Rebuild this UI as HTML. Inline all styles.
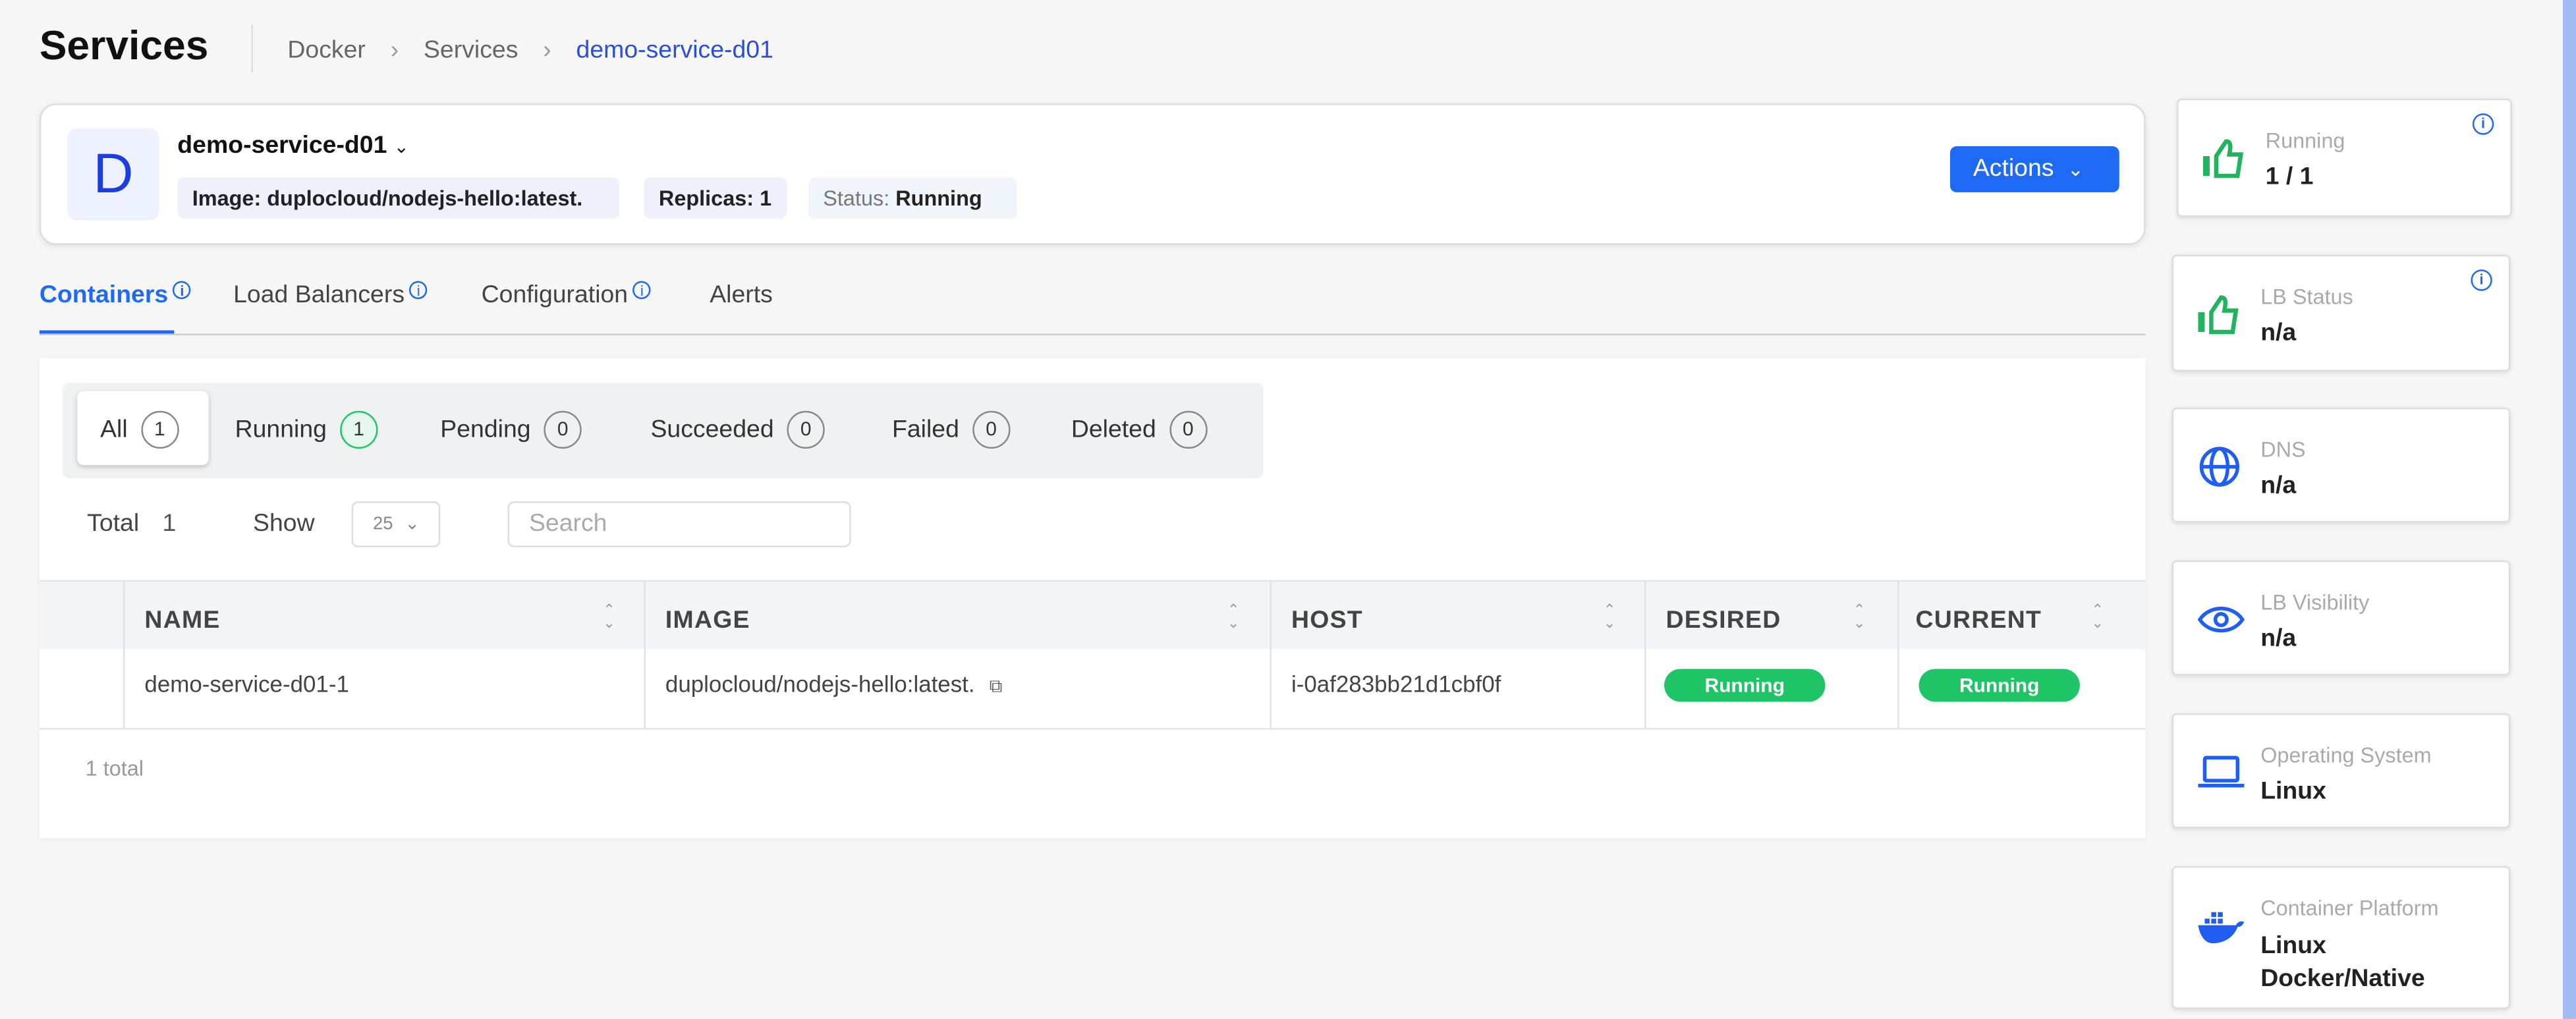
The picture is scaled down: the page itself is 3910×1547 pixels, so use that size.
<!DOCTYPE html>
<html><head><meta charset="utf-8"><style>
*{box-sizing:border-box;margin:0;padding:0}
html,body{width:3910px;height:1547px;overflow:hidden;background:#f6f6f6}
#s{position:absolute;left:0;top:0;width:1568px;height:620px;transform:scale(2.4936,2.495);transform-origin:0 0;font-family:"Liberation Sans",sans-serif;color:#222}
.a{position:absolute}
.card{background:#fff;border:1px solid #ddd;border-radius:10px}
.chip{position:absolute;top:108px;height:25px;border-radius:4px;background:#eef1fb;font-size:13px;line-height:25px;padding-left:9px;color:#222}
.tab{position:absolute;top:171px;font-size:15px;color:#444;line-height:18px}
.tab i{font-style:normal;font-size:9px;color:#1f6af5;border:1px solid #1f6af5;border-radius:50%;display:inline-block;width:11px;height:11px;line-height:10px;text-align:center;position:relative;top:-4px;margin-left:3px;vertical-align:top;margin-top:4px}
.f{position:absolute;top:250px;font-size:15px;color:#333}
.f b{display:inline-block;font-weight:normal;font-size:12px;width:23px;height:23px;line-height:21px;text-align:center;border:1px solid #888;border-radius:50%;margin-left:8px;vertical-align:1px}
.th{position:absolute;top:369px;font-size:15px;font-weight:bold;color:#444;letter-spacing:.5px}
.srt{position:absolute;top:367px;font-size:9px;color:#999;line-height:8px}
.vl{position:absolute;top:353px;width:1px;height:90px;background:#e2e2e6}
.td{position:absolute;top:408px;font-size:14px;color:#444}
.pill{position:absolute;top:407px;width:98px;height:20px;border-radius:10px;background:#1fc466;color:#fff;font-size:12px;font-weight:bold;text-align:center;line-height:20px}
.rc{position:absolute;background:#fff;border:1px solid #ddd;border-radius:3px;box-shadow:0 1px 3px rgba(0,0,0,.1)}
.rc .l{position:absolute;left:53px;font-size:13px;color:#aaa}
.rc .v{position:absolute;left:53px;font-size:15px;font-weight:bold;color:#222}
.rc svg{position:absolute;left:14px}
.inf{position:absolute;right:10px;top:8px;width:13px;height:13px;border:1.3px solid #1f6af5;border-radius:50%;font-size:9px;font-weight:bold;color:#1f6af5;text-align:center;line-height:11px}
</style></head><body><div id="s">
<div class="a" style="left:24px;top:14px;font-size:25px;font-weight:bold;color:#111">Services</div>
<div class="a" style="left:153px;top:15px;width:1px;height:29px;background:#ddd"></div>
<div class="a" style="left:175px;top:22px;font-size:15px;color:#666">Docker <span style="margin:0 11px;color:#999">›</span> Services <span style="margin:0 11px;color:#999">›</span> <span style="color:#2a4fd6">demo-service-d01</span></div>

<div class="a card" style="left:24px;top:63px;width:1282px;height:86px;box-shadow:0 1px 4px rgba(0,0,0,.08)"></div>
<div class="a" style="left:41px;top:78px;width:56px;height:56px;border-radius:6px;background:#eef2ff;color:#1c3ee0;font-size:34px;text-align:center;line-height:56px">D</div>
<div class="a" style="left:108px;top:80px;font-size:15px;font-weight:bold;color:#111">demo-service-d01 <span style="font-weight:normal;font-size:11px">⌄</span></div>
<div class="chip" style="left:108px;width:269px;font-weight:bold">Image: duplocloud/nodejs-hello:latest.</div>
<div class="chip" style="left:392px;width:87px;font-weight:bold">Replicas: 1</div>
<div class="chip" style="left:492px;width:127px;background:#f0f4fb"><span style="color:#777">Status:</span> <b>Running</b></div>
<div class="a" style="left:1187px;top:89px;width:103px;height:28px;border-radius:4px;background:#1f6af5;color:#fff;font-size:15px;line-height:28px;padding-left:14px">Actions <span style="font-size:12px;margin-left:4px">⌄</span></div>

<div class="tab" style="left:24px;color:#1f6af5;font-weight:bold">Containers<i>i</i></div>
<div class="tab" style="left:142px">Load Balancers<i>i</i></div>
<div class="tab" style="left:293px">Configuration<i>i</i></div>
<div class="tab" style="left:432px">Alerts</div>
<div class="a" style="left:24px;top:203px;width:1282px;height:1px;background:#ccc"></div>
<div class="a" style="left:24px;top:201px;width:82px;height:2px;background:#1f6af5"></div>

<div class="a" style="left:24px;top:218px;width:1282px;height:292px;background:#fff;box-shadow:0 1px 3px rgba(0,0,0,.06)"></div>
<div class="a" style="left:38px;top:233px;width:731px;height:58px;border-radius:4px;background:#f0f1f3"></div>
<div class="a" style="left:47px;top:238px;width:80px;height:45px;border-radius:4px;background:#fff;box-shadow:0 1px 3px rgba(0,0,0,.2)"></div>
<div class="f" style="left:61px">All<b>1</b></div>
<div class="f" style="left:143px">Running<b style="border-color:#1fc466;background:#e6f8ee">1</b></div>
<div class="f" style="left:268px">Pending<b>0</b></div>
<div class="f" style="left:396px">Succeeded<b>0</b></div>
<div class="f" style="left:543px">Failed<b>0</b></div>
<div class="f" style="left:652px">Deleted<b>0</b></div>

<div class="a" style="left:53px;top:310px;font-size:15px;color:#444">Total <span style="margin-left:10px;color:#555">1</span></div>
<div class="a" style="left:154px;top:310px;font-size:15px;color:#444">Show</div>
<div class="a" style="left:214px;top:305px;width:54px;height:28px;border:1px solid #ddd;border-radius:4px;font-size:11px;color:#888;line-height:26px;padding-left:12px">25 <span style="margin-left:4px">⌄</span></div>
<div class="a" style="left:309px;top:305px;width:209px;height:28px;border:1px solid #ddd;border-radius:4px;font-size:15px;color:#aaa;line-height:26px;padding-left:12px">Search</div>

<div class="a" style="left:24px;top:353px;width:1282px;height:42px;background:#f3f4f7;border-top:1px solid #e4e4e8"></div>
<div class="a" style="left:24px;top:443px;width:1282px;height:1px;background:#e4e4e8"></div>
<div class="vl" style="left:75px"></div><div class="vl" style="left:392px"></div><div class="vl" style="left:773px"></div><div class="vl" style="left:1001px"></div><div class="vl" style="left:1155px"></div>
<div class="th" style="left:88px">NAME</div><div class="srt" style="left:367px">⌃<br>⌄</div>
<div class="th" style="left:405px">IMAGE</div><div class="srt" style="left:747px">⌃<br>⌄</div>
<div class="th" style="left:786px">HOST</div><div class="srt" style="left:976px">⌃<br>⌄</div>
<div class="th" style="left:1014px">DESIRED</div><div class="srt" style="left:1128px">⌃<br>⌄</div>
<div class="th" style="left:1166px">CURRENT</div><div class="srt" style="left:1273px">⌃<br>⌄</div>
<div class="td" style="left:88px">demo-service-d01-1</div>
<div class="td" style="left:405px">duplocloud/nodejs-hello:latest. <span style="font-size:11px;color:#555;margin-left:5px">⧉</span></div>
<div class="td" style="left:786px">i-0af283bb21d1cbf0f</div>
<div class="pill" style="left:1013px">Running</div>
<div class="pill" style="left:1168px">Running</div>
<div class="a" style="left:52px;top:460px;font-size:13px;color:#999">1 total</div>

<div class="rc" style="left:1325px;top:60px;width:204px;height:72px"><div class="inf">i</div>
<svg style="top:22px" width="28" height="26" viewBox="0 0 28 26" fill="none" stroke="#22b35e" stroke-width="2.6"><rect x="1" y="12" width="4" height="12" fill="#22b35e" stroke="none"/><path d="M9 24V12l6-9c3 0 3 3 2 8h7l-2 13z"/></svg>
<div class="l" style="top:17px">Running</div><div class="v" style="top:38px">1 / 1</div></div>
<div class="rc" style="left:1322px;top:155px;width:206px;height:71px"><div class="inf">i</div>
<svg style="top:22px" width="28" height="26" viewBox="0 0 28 26" fill="none" stroke="#22b35e" stroke-width="2.6"><rect x="1" y="12" width="4" height="12" fill="#22b35e" stroke="none"/><path d="M9 24V12l6-9c3 0 3 3 2 8h7l-2 13z"/></svg>
<div class="l" style="top:17px">LB Status</div><div class="v" style="top:38px">n/a</div></div>
<div class="rc" style="left:1322px;top:248px;width:206px;height:70px">
<svg style="top:22px" width="28" height="26" viewBox="0 0 28 26" fill="none" stroke="#1f5ef0" stroke-width="2.2"><circle cx="14" cy="13" r="11"/><ellipse cx="14" cy="13" rx="5" ry="11"/><path d="M3 13h22"/></svg>
<div class="l" style="top:17px">DNS</div><div class="v" style="top:38px">n/a</div></div>
<div class="rc" style="left:1322px;top:341px;width:206px;height:70px">
<svg style="top:22px" width="30" height="26" viewBox="0 0 30 26" fill="none" stroke="#1f5ef0" stroke-width="2.2"><path d="M2 13C8 4 22 4 28 13C22 22 8 22 2 13z"/><circle cx="15" cy="13" r="3.5"/></svg>
<div class="l" style="top:17px">LB Visibility</div><div class="v" style="top:38px">n/a</div></div>
<div class="rc" style="left:1322px;top:434px;width:206px;height:70px">
<svg style="top:22px" width="30" height="26" viewBox="0 0 30 26" fill="none" stroke="#1f5ef0" stroke-width="2.2"><rect x="5" y="4" width="20" height="14" rx="1"/><path d="M1 21h28"/></svg>
<div class="l" style="top:17px">Operating System</div><div class="v" style="top:38px">Linux</div></div>
<div class="rc" style="left:1322px;top:527px;width:206px;height:87px">
<svg style="top:24px" width="30" height="24" viewBox="0 0 30 24" fill="#1f5ef0"><rect x="5" y="7" width="3" height="3"/><rect x="9" y="7" width="3" height="3"/><rect x="13" y="7" width="3" height="3"/><rect x="9" y="3" width="3" height="3"/><rect x="13" y="3" width="3" height="3"/><path d="M1 11h23c1-2 3-3 5-2c-1 2-2 3-4 3c-2 6-8 10-15 10C5 22 2 17 1 11z"/></svg>
<div class="l" style="top:17px">Container Platform</div><div class="v" style="top:38px;line-height:20px">Linux<br>Docker/Native</div></div>

<div class="a" style="left:1560px;top:0;width:8px;height:620px;background:#a3bbf3"></div>
</div></body></html>
